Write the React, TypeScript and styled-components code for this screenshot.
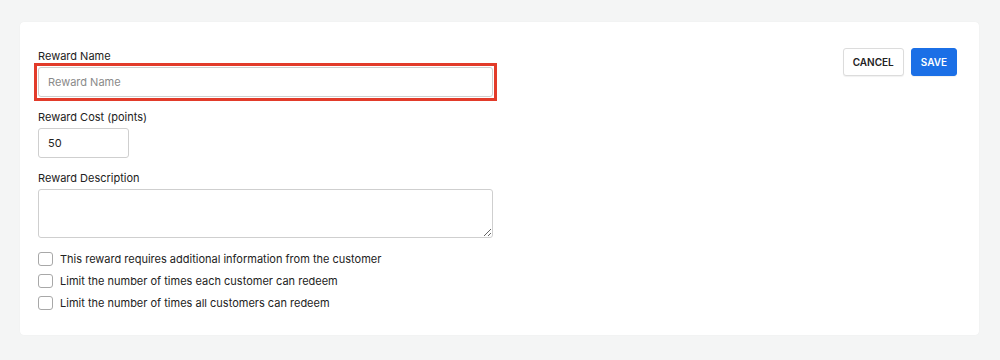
import React, { useState } from 'react';
import styled, { createGlobalStyle } from 'styled-components';

const GlobalStyle = createGlobalStyle`
  html, body {
    margin: 0;
    padding: 0;
    background: #f4f5f5;
    font-family: Inter, "Noto Sans", "Liberation Sans", sans-serif;
    color: #222;
  }
  * { box-sizing: border-box; }
`;

const Page = styled.div`
  padding: 22px 21px 25px 20px;
`;

const Card = styled.div`
  display: flex;
  align-items: flex-start;
  background: #fff;
  border-radius: 4px;
  box-shadow: 0 0 1px rgba(0, 0, 0, 0.08);
  padding: 26px 22px 21px 18px;
  min-height: 313px;
`;

const Form = styled.div`
  display: flex;
  flex-direction: column;
  width: 455px;
`;

const Field = styled.div`
  display: flex;
  flex-direction: column;
  margin-bottom: 12px;
`;

const Label = styled.label`
  font-size: 11px;
  line-height: 16px;
  color: #222;
  margin-bottom: 3px;
`;

// annotation frame drawn around the highlighted field
const Highlight = styled.div`
  margin: -4px;
  padding: 1px;
  border: 3px solid #e23b2a;
`;

const TextInput = styled.input<{ $width?: number }>`
  display: block;
  width: ${(p) => (p.$width ? `${p.$width}px` : '100%')};
  height: 30px;
  padding: 0 9px;
  border: 1px solid #cfcfcf;
  border-radius: 3px;
  font-family: inherit;
  font-size: 11px;
  color: #222;
  background: #fff;
  outline: none;

  &::placeholder {
    color: #8a8a8a;
  }
`;

const TextArea = styled.textarea`
  width: 100%;
  height: 49px;
  padding: 6px 9px;
  border: 1px solid #cfcfcf;
  border-radius: 3px;
  font-family: inherit;
  font-size: 11px;
  outline: none;
`;

const Options = styled.div`
  display: flex;
  flex-direction: column;
  margin-top: -2px;
`;

const CheckRow = styled.label`
  display: flex;
  align-items: center;
  gap: 7px;
  height: 22px;
  font-size: 11px;
  color: #222;
  cursor: pointer;
`;

const Check = styled.input.attrs({ type: 'checkbox' })`
  appearance: none;
  width: 15px;
  height: 14px;
  margin: 0;
  border: 1px solid #a8a8a8;
  border-radius: 3px;
  background: #fff;

  &:checked {
    background: #1b6fe6;
    border-color: #1b6fe6;
  }
`;

const Actions = styled.div`
  display: flex;
  gap: 7px;
  margin-left: auto;
`;

const Button = styled.button<{ $primary?: boolean }>`
  height: 28px;
  padding: 0 9px;
  border-radius: 3px;
  border: 1px solid ${(p) => (p.$primary ? '#1b6fe6' : '#dcdcdc')};
  background: ${(p) => (p.$primary ? '#1b6fe6' : '#fff')};
  color: ${(p) => (p.$primary ? '#fff' : '#222')};
  font-family: inherit;
  font-size: 10px;
  font-weight: 600;
  text-transform: uppercase;
  box-shadow: 0 1px 1px rgba(0, 0, 0, 0.06);
  cursor: pointer;
`;

const options = [
  'This reward requires additional information from the customer',
  'Limit the number of times each customer can redeem',
  'Limit the number of times all customers can redeem',
];

export default function App() {
  const [name, setName] = useState('');
  const [cost, setCost] = useState('50');
  const [desc, setDesc] = useState('');
  const [checked, setChecked] = useState<boolean[]>([false, false, false]);

  return (
    <Page>
      <GlobalStyle />
      <Card>
        <Form>
          <Field>
            <Label>Reward Name</Label>
            <Highlight>
              <TextInput
                placeholder="Reward Name"
                value={name}
                onChange={(e) => setName(e.target.value)}
              />
            </Highlight>
          </Field>
          <Field>
            <Label>Reward Cost (points)</Label>
            <TextInput $width={91} value={cost} onChange={(e) => setCost(e.target.value)} />
          </Field>
          <Field>
            <Label>Reward Description</Label>
            <TextArea value={desc} onChange={(e) => setDesc(e.target.value)} />
          </Field>
          <Options>
            {options.map((text, i) => (
              <CheckRow key={text}>
                <Check
                  checked={checked[i]}
                  onChange={() => setChecked(checked.map((c, j) => (j === i ? !c : c)))}
                />
                {text}
              </CheckRow>
            ))}
          </Options>
        </Form>
        <Actions>
          <Button>Cancel</Button>
          <Button $primary>Save</Button>
        </Actions>
      </Card>
    </Page>
  );
}
